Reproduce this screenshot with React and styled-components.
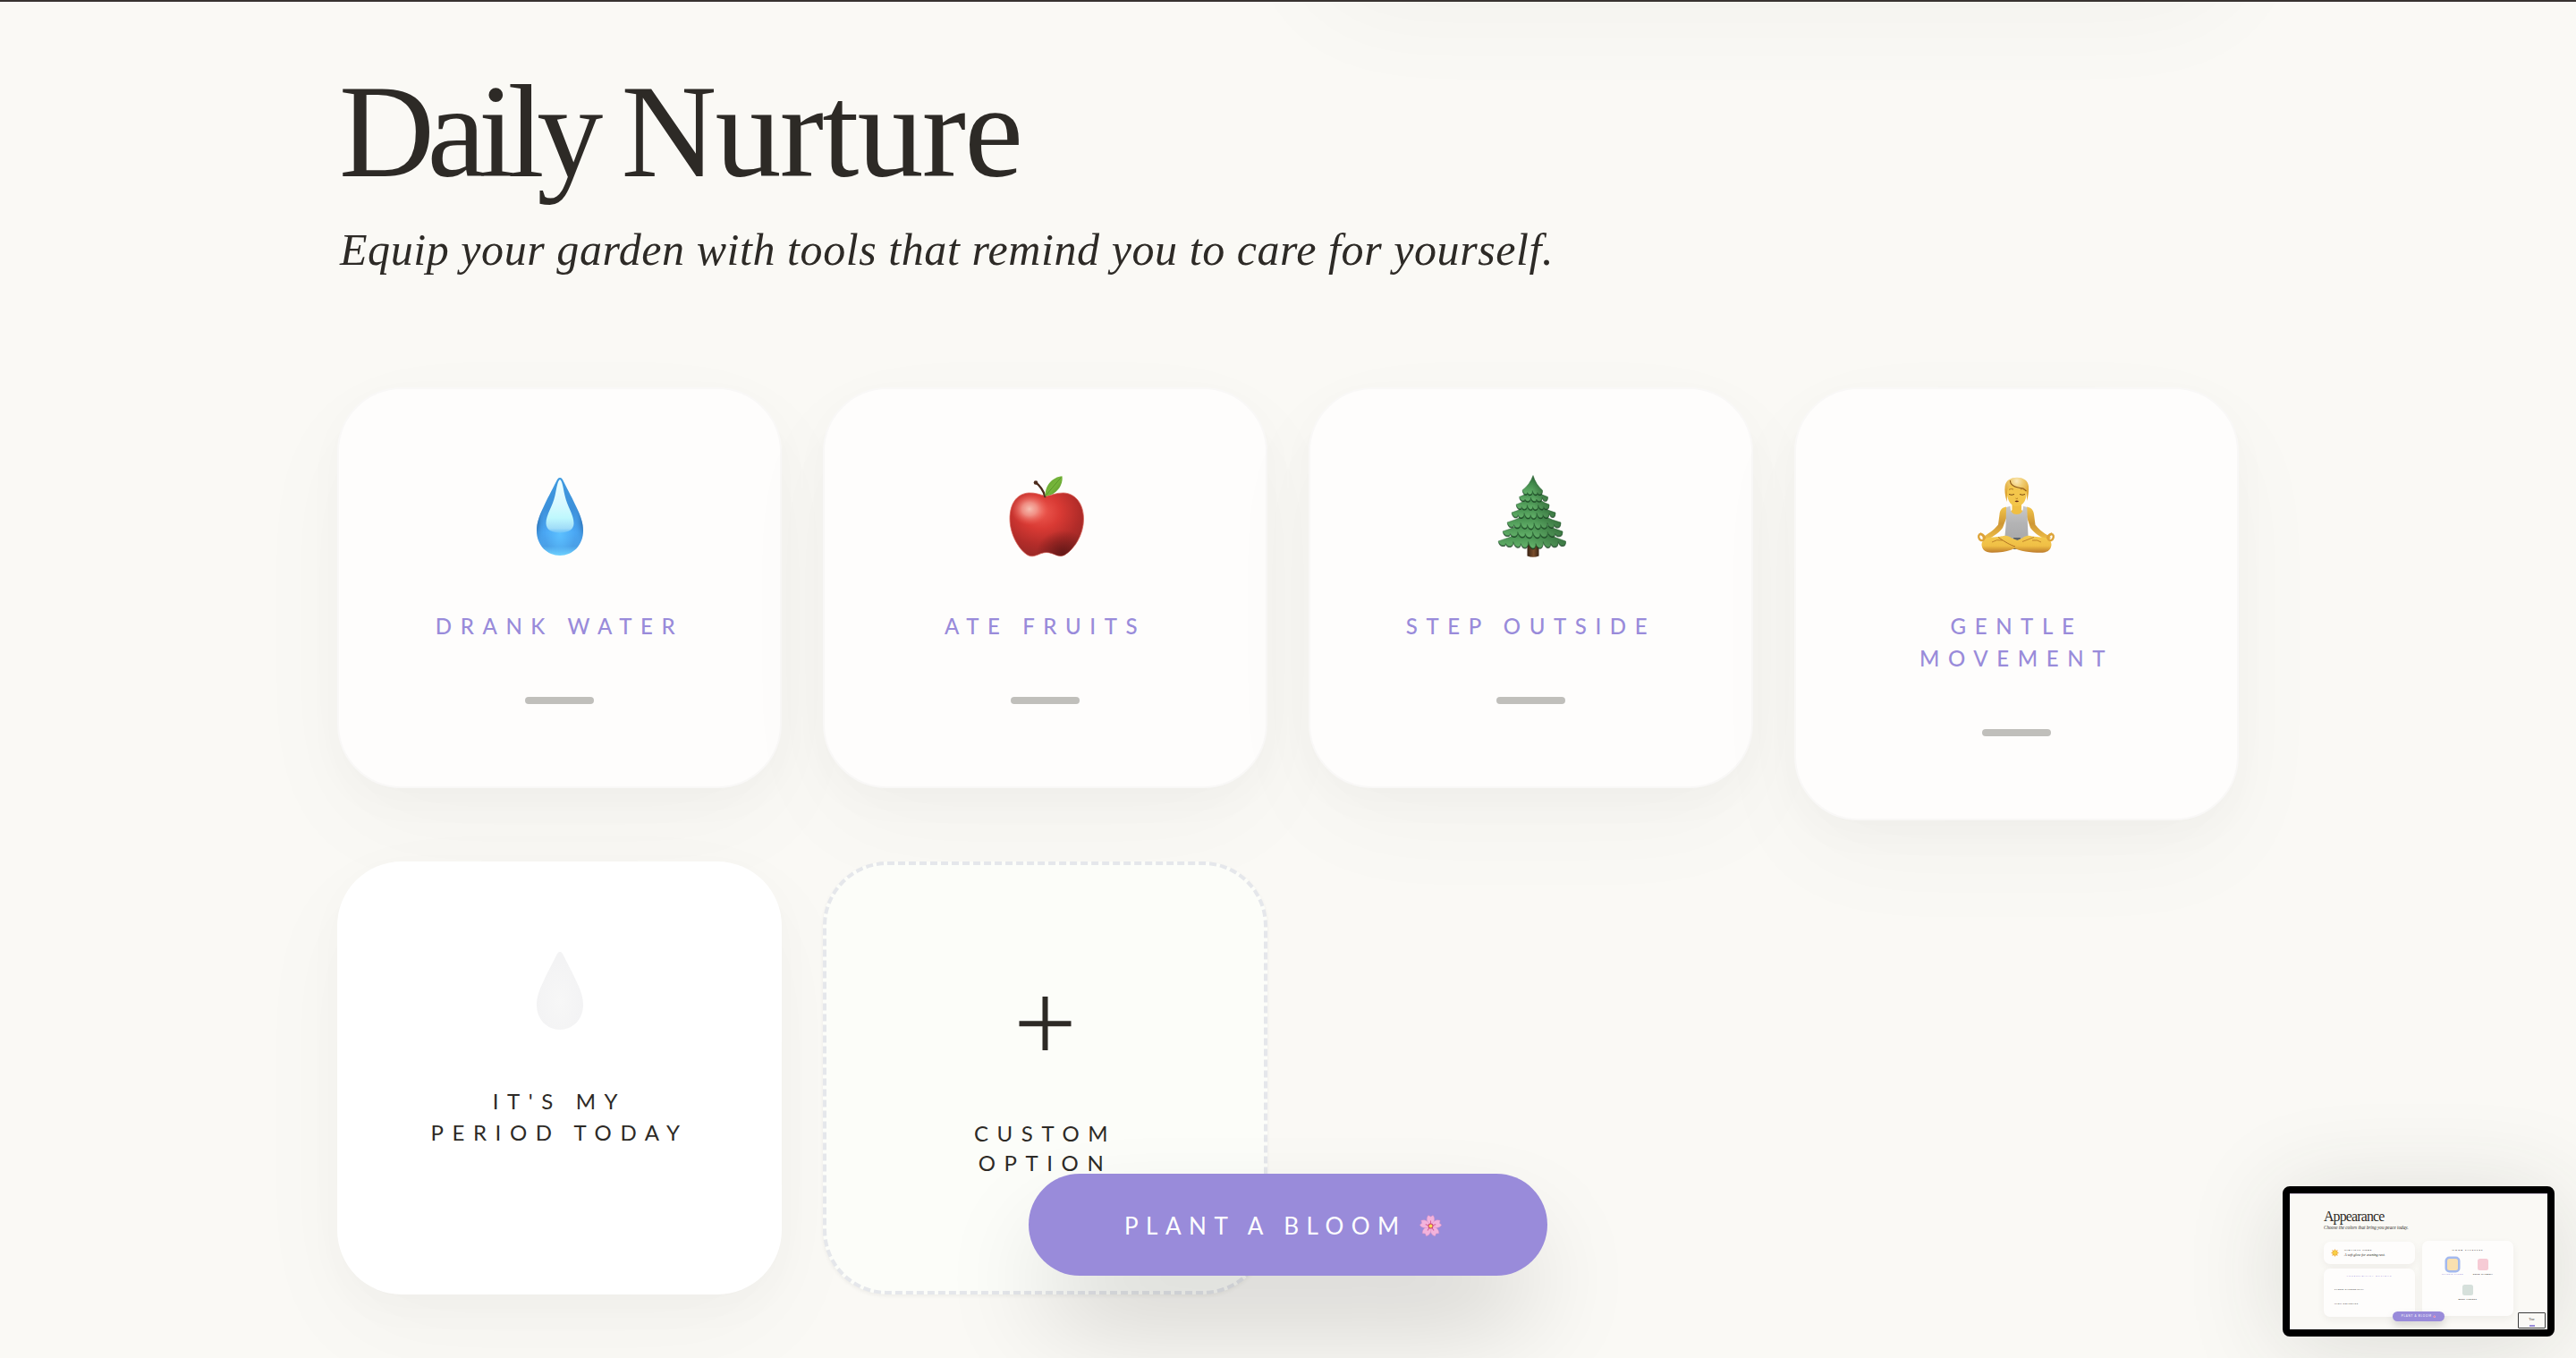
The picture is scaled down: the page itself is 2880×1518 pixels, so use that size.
import React from "react";
import styled, { createGlobalStyle, css } from "styled-components";

const serif = `"Liberation Serif", "Times New Roman", serif`;
const sans = `Lato, "Liberation Sans", sans-serif`;

const color = {
  page: "#faf9f5",
  ink: "#2d2a26",
  lilac: "#998bda",
  card: "#fefdfc",
};

const softShadow = "0 40px 120px rgba(0, 0, 0, 0.032), 0 16px 48px rgba(0, 0, 0, 0.025)";

const GlobalStyle = createGlobalStyle`
  *, *::before, *::after { box-sizing: border-box; }
  html, body { margin: 0; height: 100%; overflow: hidden; background: ${color.page}; }
  h1, h2, p { margin: 0; font-weight: 400; }
  button { font: inherit; border: 0; padding: 0; cursor: pointer; }
`;

const Page = styled.main`
  position: relative;
  height: 1518px;
  overflow: hidden;
  border-top: 2px solid #383331;
  background: ${color.page};
  color: ${color.ink};
`;

const PreviousPanelShadow = styled.div`
  position: absolute;
  top: -825px;
  left: 1463px;
  width: 1040px;
  height: 800px;
  border-radius: 80px;
  box-shadow: 0 40px 120px rgba(0, 0, 0, 0.036);
`;

const Section = styled.section`
  position: relative;
  width: 2126px;
  margin: 0 auto;
  padding-top: 65px;
`;

const Title = styled.h1`
  margin-left: 2px;
  font: 400 148px/160px ${serif};
  letter-spacing: -8.4px;
  white-space: nowrap;
`;

const TitleWord = styled.span`
  letter-spacing: ${({ $track }) => $track}px;
`;

const Subtitle = styled.p`
  margin-top: 14px;
  margin-left: 3px;
  font: italic 400 50px/76px ${serif};
  letter-spacing: 0.57px;
  white-space: nowrap;
`;

const Grid = styled.div`
  display: grid;
  grid-template-columns: repeat(4, 1fr);
  gap: 46px;
  align-items: start;
  margin-top: 116px;
`;

const Card = styled.button`
  display: flex;
  flex-direction: column;
  align-items: center;
  border-radius: 72px;
  color: ${color.ink};
  ${({ $kind }) =>
    $kind === "habit" &&
    css`
      padding: 93px 60px 92px;
      border: 2px solid #f9f8f7;
      background: ${color.card};
      color: ${color.lilac};
      box-shadow: ${softShadow};
    `}
  ${({ $kind }) =>
    $kind === "period" &&
    css`
      height: 484px;
      padding-top: 95px;
      background: #fff;
      box-shadow: ${softShadow};
    `}
  ${({ $kind }) =>
    $kind === "custom" &&
    css`
      height: 484px;
      padding-top: 147px;
      border: 4px dashed #e5e7eb;
      background: #fcfdf9;
      box-shadow: 0 2px 4px rgba(0, 0, 0, 0.05);
    `}
`;

const Label = styled.span`
  display: block;
  margin-top: ${({ $top }) => $top}px;
  font: ${({ $weight }) => $weight || 400} 24px/${({ $line }) => $line}px ${sans};
  letter-spacing: 9.6px;
  text-align: center;
  white-space: pre-line;
`;

const Meter = styled.span`
  width: 77px;
  height: 8px;
  margin-top: 61px;
  border-radius: 4px;
  background: #c0bfbb;
`;

const PlantButton = styled.button`
  position: absolute;
  left: 1150px;
  top: 1310px;
  display: flex;
  align-items: center;
  width: 580px;
  height: 114px;
  padding: 2px 0 0 107px;
  border-radius: 57px;
  background: ${color.lilac};
  color: #fff;
  font: 400 26px/40px ${sans};
  letter-spacing: 8.5px;
  white-space: nowrap;
  box-shadow: 0 60px 120px -20px rgba(0, 0, 0, 0.22);
`;

const ButtonIcon = styled.span`
  display: flex;
  margin-left: 13px;
`;

/* ---------- icons ---------- */

const DROP =
  "M48 6C50 6 51 8 52 10C58 22 62 29 66 38C71 48 74 57 74 65C74 82 62 93 48 93C34 93 22 82 22 65C22 57 25 48 30 38C34 29 38 22 44 10C45 8 46 6 48 6Z";

const WaterDrop = () => (
  <svg width="96" height="96" viewBox="0 0 96 96">
    <defs>
      <linearGradient id="wdBase" x1="0" y1="0" x2="0" y2="1">
        <stop offset="0" stopColor="#3f9be0" />
        <stop offset=".4" stopColor="#3d90da" />
        <stop offset=".7" stopColor="#4ba8f5" />
        <stop offset=".88" stopColor="#4a9fe6" />
        <stop offset="1" stopColor="#72d4ff" />
      </linearGradient>
      <linearGradient id="wdSide" x1="0" y1="0" x2="1" y2="0">
        <stop offset="0" stopColor="#235f9f" stopOpacity=".75" />
        <stop offset=".2" stopColor="#4aa6f2" stopOpacity="0" />
        <stop offset=".8" stopColor="#4aa6f2" stopOpacity="0" />
        <stop offset="1" stopColor="#235f9f" stopOpacity=".75" />
      </linearGradient>
      <linearGradient id="wdFade" x1="0" y1="0" x2="0" y2="1">
        <stop offset="0" stopColor="#fff" />
        <stop offset=".6" stopColor="#fff" />
        <stop offset=".82" stopColor="#000" />
      </linearGradient>
      <mask id="wdMask">
        <rect width="96" height="96" fill="url(#wdFade)" />
      </mask>
      <radialGradient id="wdGlow" cx=".5" cy=".72" r=".32">
        <stop offset="0" stopColor="#5cc0ff" />
        <stop offset="1" stopColor="#5cc0ff" stopOpacity="0" />
      </radialGradient>
      <linearGradient id="wdLight" x1="0" y1="0" x2="0" y2="1">
        <stop offset="0" stopColor="#effeff" />
        <stop offset=".45" stopColor="#d8f9ff" />
        <stop offset=".72" stopColor="#bff8fd" />
        <stop offset=".92" stopColor="#a0dcf8" />
        <stop offset="1" stopColor="#84cdf7" stopOpacity=".5" />
      </linearGradient>
    </defs>
    <path d={DROP} fill="url(#wdBase)" />
    <path d={DROP} fill="url(#wdSide)" mask="url(#wdMask)" />
    <path d={DROP} fill="url(#wdGlow)" />
    <path
      d="M48 8C50.5 9 51.5 17 53.5 26C56 38 63.5 47 63.5 57C63.5 64 57 67.5 48 67.5C39 67.5 32.5 64 32.5 57C32.5 47 40 38 42.5 26C44.500 17 45.5 9 48 8Z"
      fill="url(#wdLight)"
    />
  </svg>
);

const FadedDrop = () => (
  <svg width="96" height="96" viewBox="0 0 96 96">
    <defs>
      <radialGradient id="fdFill" cx=".5" cy=".63" r=".5">
        <stop offset="0" stopColor="#f7f7f7" />
        <stop offset="1" stopColor="#f3f3f4" />
      </radialGradient>
    </defs>
    <path d={DROP} fill="url(#fdFill)" />
  </svg>
);

const APPLE_BODY =
  "M48 26.5C42 25 36 22.5 29 23C15 24 8 36 8 52C8 70 19 88 29 93C36 96 41 89.500 49 89.5C57 89.5 62 96 69 92.5C80 86 90.5 70 90.5 52C90.5 36 82 23.5 68 23C60 22.7 54 26 48 26.5Z";

const Apple = () => (
  <svg width="96" height="96" viewBox="0 0 96 96">
    <defs>
      <radialGradient id="apBody" cx=".42" cy=".3" r=".75">
        <stop offset="0" stopColor="#ee5a50" />
        <stop offset=".35" stopColor="#d93a34" />
        <stop offset=".7" stopColor="#b22c29" />
        <stop offset="1" stopColor="#952826" />
      </radialGradient>
      <radialGradient id="apShade" cx=".72" cy=".95" r=".36">
        <stop offset="0" stopColor="#5a1414" stopOpacity=".8" />
        <stop offset="1" stopColor="#5a1414" stopOpacity="0" />
      </radialGradient>
      <radialGradient id="apShine" cx=".5" cy=".5" r=".5">
        <stop offset="0" stopColor="#f7bfb2" />
        <stop offset=".4" stopColor="#f5a79b" stopOpacity=".75" />
        <stop offset="1" stopColor="#ee6258" stopOpacity="0" />
      </radialGradient>
      <linearGradient id="apLeaf" x1="0" y1="0" x2="1" y2="1">
        <stop offset="0" stopColor="#5a9a2c" />
        <stop offset=".5" stopColor="#79b83c" />
        <stop offset="1" stopColor="#4f8c24" />
      </linearGradient>
    </defs>
    <path d={APPLE_BODY} fill="url(#apBody)" stroke="#d9665c" strokeWidth=".8" />
    <path d={APPLE_BODY} fill="url(#apShade)" />
    <ellipse cx="30" cy="41" rx="21" ry="18" fill="url(#apShine)" />
    <path d="M37 11.5C41 14 46 21 47.3 27" fill="none" stroke="#4b2a1c" strokeWidth="2.4" strokeLinecap="round" />
    <circle cx="37" cy="11.5" r="2.3" fill="#4b2a1c" />
    <path d="M47.5 26.5C47 15 56 5 66.5 4.3C68 14 60 26 47.5 26.5Z" fill="url(#apLeaf)" />
    <path d="M48.5 25.5C54 19 59 13 65.5 5.5" stroke="#4f8c24" strokeWidth=".8" fill="none" />
  </svg>
);

/* Each skirt of the evergreen has sloping sides and a row of rounded needles. */
const TIERS = [
  { top: 56, y: 77, left: 11, right: 86.5, n: 9, drop: 9 },
  { top: 48, y: 66, left: 16, right: 83, n: 8, drop: 8 },
  { top: 40, y: 56, left: 21, right: 81, n: 8, drop: 8 },
  { top: 31, y: 45, left: 26, right: 75, n: 7, drop: 7 },
  { top: 23, y: 36, left: 31, right: 68, n: 6, drop: 6 },
  { top: 16, y: 27.5, left: 34.5, right: 66.5, n: 5, drop: 5 },
  { top: 3.5, y: 20, left: 38, right: 60.5, n: 4, drop: 5 },
];

function skirt({ top, y, left, right, n, drop }) {
  const step = (right - left) / n;
  let d = `M50 ${top}Q${50 + (right - 50) * 0.3} ${(top + y) / 2 + 2} ${right} ${y}`;
  for (let i = n; i > 0; i--) {
    const x = left + step * (i - 1);
    const mid = x + step / 2;
    const sag = y + drop * (1 - Math.abs(mid - 50) / 75);
    const notch = i > 1 ? y + (i % 2 ? 0.5 : 2.5) : y;
    d += `C${x + step * 1.1} ${sag} ${x + step * 0.3} ${sag + 2} ${x} ${notch}`;
  }
  return `${d}Q${50 - (50 - left) * 0.3} ${(top + y) / 2 + 2} 50 ${top}Z`;
}

const Evergreen = () => (
  <svg width="96" height="96" viewBox="0 0 96 96">
    <defs>
      <linearGradient id="evTrunk" x1="0" y1="0" x2="1" y2="0">
        <stop offset="0" stopColor="#3a2415" />
        <stop offset=".55" stopColor="#7a4d2b" />
        <stop offset="1" stopColor="#3a2415" />
      </linearGradient>
      <linearGradient id="evLeaf" x1="0" y1="0" x2="0" y2="1">
        <stop offset="0" stopColor="#2c6136" />
        <stop offset=".4" stopColor="#418a4b" />
        <stop offset="1" stopColor="#66b46c" />
      </linearGradient>
      <linearGradient id="evSide" x1="0" y1="0" x2="1" y2="0">
        <stop offset=".5" stopColor="#123418" stopOpacity="0" />
        <stop offset="1" stopColor="#123418" stopOpacity=".4" />
      </linearGradient>
    </defs>
    <path d="M43.5 76H56.5V93.5Q50 96 43.5 93.5Z" fill="url(#evTrunk)" />
    {TIERS.map((t) => (
      <g key={t.y}>
        <path d={skirt(t)} fill="#173c1f" opacity=".8" transform="translate(0 1.4)" />
        <path d={skirt(t)} fill="url(#evLeaf)" stroke="#2d6636" strokeWidth=".5" />
        <path d={skirt(t)} fill="url(#evSide)" />
      </g>
    ))}
  </svg>
);

const Lotus = () => (
  <svg width="96" height="96" viewBox="0 0 96 96">
    <defs>
      <linearGradient id="loSkin" x1="0" y1="0" x2="0" y2="1">
        <stop offset="0" stopColor="#f3c94f" />
        <stop offset=".6" stopColor="#f0bf45" />
        <stop offset="1" stopColor="#bd7b2b" />
      </linearGradient>
      <linearGradient id="loArm" x1="0" y1="0" x2="0" y2="1">
        <stop offset="0" stopColor="#f3c548" />
        <stop offset=".5" stopColor="#cf9735" />
        <stop offset="1" stopColor="#f1c149" />
      </linearGradient>
      <linearGradient id="loShirt" x1="0" y1="0" x2="0" y2="1">
        <stop offset="0" stopColor="#c9c9c9" />
        <stop offset=".5" stopColor="#b3b3b4" />
        <stop offset="1" stopColor="#a8a8a9" />
      </linearGradient>
      <radialGradient id="loHair" cx=".5" cy=".15" r=".65">
        <stop offset="0" stopColor="#fae9bd" />
        <stop offset=".4" stopColor="#f1cd72" />
        <stop offset="1" stopColor="#dfa531" />
      </radialGradient>
    </defs>
    <path d="M36 38.5C31 39.5 29 42 28.5 47L27 58.5C22 65 15 69 9 73L12 76.5C19 73 27 69 32 62L36.5 50Z" fill="url(#loArm)" />
    <path d="M59 38.5C64 39.5 66.5 42 67 47L68.5 58.5C73 65 80 69 86 73L83 76.5C76 73 68 69 63 62L59 50Z" fill="url(#loArm)" />
    <path d="M42.5 34H53V42L60 48H36L42.5 42Z" fill="#f0bf43" />
    <path d="M36 39L40.5 37.8C40.5 44 43 47 47.8 47C52.5 47 55 44 55 37.8L59.3 39L60 60L60.8 77H34L35.5 60Z" fill="url(#loShirt)" />
    <path d="M44 73H52V86H44Z" fill="#5d636b" />
    <path d="M8.5 81C8.5 75 14 72.5 22 72.5L31 71.5C35 70 39 71 42 73.5L54 78C47 86 38 89.7 20 89.7C12 89.7 9 86 8.5 81Z" fill="url(#loSkin)" />
    <path d="M86.5 81C86.5 75 82 72.5 74 72.5L65 71.5C61 70 57 71 54 73.5L46 77L30 71.5C27 73 35 80 43 84C52 88.5 62 89.7 75 89.7C83 89.7 86 86 86.5 81Z" fill="url(#loSkin)" />
    <path d="M27 72.5C35 78 40 81 46 83" stroke="#a8691f" strokeWidth=".9" fill="none" />
    <path d="M67 72.5L54 77.5M20 78Q25 74.5 32 76M75 78Q71 75 65 76" stroke="#b97c27" strokeWidth=".9" fill="none" />
    <path d="M12 73L7.5 68.5M8 76C5 75 4.500 71 6 69.5C8.500 68 11.5 70.5 11.5 72.500C11.5 74.5 10.5 76.500 8 76Z" fill="none" stroke="#dda338" strokeWidth="2.4" strokeLinecap="round" />
    <path d="M82 73L86.5 68.5M86 76C89 75 89.5 71 88 69.5C85.500 68 82.5 70.5 82.5 72.500C82.5 74.5 83.5 76.500 86 76Z" fill="none" stroke="#dda338" strokeWidth="2.4" strokeLinecap="round" />
    <path d="M36.5 18C36 12 40 9 47.8 9C55 9 59.3 12 59 19C59.3 29 56 37.8 47.8 37.8C39.5 37.8 36.3 29 36.5 18Z" fill="#f3c64b" />
    <path d="M36.8 33C34.5 26 34 20 34.6 15.5C35.5 9 41 5.7 48 5.7C55 5.7 60.4 9 61 15.5C61.5 21 60.5 27 59.2 32L58.7 21C55 18.5 45 18.5 40.5 13C39.5 16 37.5 18 37 22Z" fill="url(#loHair)" />
    <path d="M40.5 9C40 14 46 17 55 18L58.5 21" fill="none" stroke="#8f5a18" strokeWidth="1.1" />
    <path d="M39 19.3Q41.5 17.8 44 19M51.8 19Q54 17.8 56.5 19.3" fill="none" stroke="#a8711f" strokeWidth=".9" />
    <path d="M39 24.5Q42 26 45 24.5M51 24.5Q54 26 57 24.5" fill="none" stroke="#7b4c14" strokeWidth="1" />
    <path d="M46.5 29Q47.8 30 49 29" fill="none" stroke="#a96e20" strokeWidth=".8" />
    <path d="M45.5 32.2Q47.8 31 50.2 32.2Q47.8 34.5 45.5 32.2Z" fill="#6b2f18" />
  </svg>
);

const Blossom = ({ size = 27 }) => (
  <svg width={size} height={size} viewBox="0 0 26 26">
    {[0, 72, 144, 216, 288].map((a) => (
      <g key={a} transform={`rotate(${a} 13 13)`}>
        <path d="M13 13C8.5 9.5 7.8 4.5 10.5 1.4L13 3L15.5 1.4C18.2 4.5 17.5 9.5 13 13Z" fill="#f3b3dc" stroke="#d98abf" strokeWidth=".4" />
        <path d="M13 12V7.500" stroke="#d9609a" strokeWidth="1" strokeLinecap="round" />
      </g>
    ))}
    <circle cx="13" cy="13" r="2.8" fill="#c93f6c" />
    <circle cx="13" cy="13" r="1.9" fill="#f4dc50" />
  </svg>
);

const Plus = () => (
  <svg width="60" height="60" viewBox="0 0 60 60">
    <path d="M29.500 0V60M.5 30.3H58.5" stroke={color.ink} strokeWidth="6" />
  </svg>
);

/* ---------- miniature preview window ---------- */

const Pip = styled.aside`
  position: absolute;
  left: 2552px;
  top: 1324px;
  width: 304px;
  height: 168px;
  border: 8px solid #000;
  border-radius: 8px;
  background: ${color.page};
  box-shadow: 0 10px 110px rgba(45, 55, 45, 0.15);
`;

const PipPage = styled.div`
  position: relative;
  height: 152px;
  padding: 16px 38px 0;
  border-top: 1px solid #d9cfe0;
  overflow: hidden;
`;

const PipTitle = styled.h2`
  font: 400 15.8px/18px ${serif};
  letter-spacing: -0.8px;
`;

const PipSubtitle = styled.p`
  font: italic 400 5.2px/7px ${serif};
  letter-spacing: -0.02px;
  white-space: nowrap;
`;

const PipColumns = styled.div`
  display: grid;
  grid-template-columns: 102px 102px;
  column-gap: 8px;
  align-items: start;
  margin-top: 11px;
`;

const PipStack = styled.div`
  display: grid;
  row-gap: 5px;
  padding-top: 1px;
`;

const PipCard = styled.div`
  height: ${({ $h }) => $h}px;
  padding: ${({ $pad }) => $pad || "0"};
  border-radius: 7px;
  background: #fefdfc;
  box-shadow: 0 3px 8px rgba(45, 42, 38, 0.06);
`;

const PipRow = styled(PipCard)`
  display: flex;
  align-items: center;
  gap: 6px;
`;

const Tiny = styled.p`
  font: ${({ $italic }) => ($italic ? `italic 4.2px/5px ${serif}` : `600 2.5px/4px ${sans}`)};
  letter-spacing: ${({ $track }) => $track ?? 0.75}px;
  color: ${({ $lilac }) => ($lilac ? color.lilac : color.ink)};
  text-align: ${({ $center }) => ($center ? "center" : "left")};
  margin-top: ${({ $top }) => $top || 0}px;
  white-space: nowrap;
`;

const Swatches = styled.div`
  display: flex;
  flex-wrap: wrap;
  justify-content: center;
  gap: 9px 8px;
  margin-top: 7px;
`;

const SwatchItem = styled.div`
  display: flex;
  flex-direction: column;
  align-items: center;
  width: 26px;
`;

const Swatch = styled.span`
  width: 12.5px;
  height: 12.5px;
  border-radius: 2.5px;
  background: ${({ $fill }) => $fill};
  box-shadow: ${({ $on }) => ($on ? "0 0 0 2.5px #a3b9ee" : "none")};
`;

const PipPlant = styled.div`
  position: absolute;
  left: 115px;
  top: 130.5px;
  display: flex;
  align-items: center;
  justify-content: center;
  gap: 1px;
  width: 58px;
  height: 11.5px;
  border-radius: 6px;
  background: ${color.lilac};
  color: #fff;
  font: 400 2.9px/4px ${sans};
  letter-spacing: 0.85px;
  box-shadow: 0 5px 10px rgba(0, 0, 0, 0.15);
`;

const NestedPip = styled.div`
  position: absolute;
  left: 255px;
  top: 132px;
  width: 31px;
  height: 17.5px;
  padding: 5px 4px 0;
  border: 1px solid #3b3b3b;
  border-radius: 1px;
  background: ${color.page};
  text-align: center;
  font: 400 3px/4px ${serif};
`;

const NestedBar = styled.div`
  width: 6px;
  height: 1.5px;
  margin: 4px auto 0;
  background: ${color.lilac};
`;

const Sun = () => (
  <svg width="9" height="9" viewBox="0 0 18 18">
    <path
      d="M9 0L11 4L15.4 2.6L14 7L18 9L14 11L15.4 15.4L11 14L9 18L7 14L2.6 15.4L4 11L0 9L4 7L2.6 2.6L7 4Z"
      fill="#f0a93a"
    />
    <circle cx="9" cy="9" r="4.8" fill="#f7cf45" />
  </svg>
);

const Preview = () => (
  <Pip>
    <PipPage>
      <PipTitle>Appearance</PipTitle>
      <PipSubtitle>Choose the colors that bring you peace today.</PipSubtitle>
      <PipColumns>
        <PipStack>
          <PipRow $h={25} $pad="0 0 0 8px">
            <Sun />
            <div>
              <Tiny>MIDNIGHT MODE</Tiny>
              <Tiny $italic $track={-0.05}>A soft glow for evening rest.</Tiny>
            </div>
          </PipRow>
          <PipCard $h={54} $pad="7px 12px 0">
            <Tiny $lilac $center $track={1.05}>ACCESSIBILITY OPTIONS</Tiny>
            <Tiny $top={10.5} $track={0.5}>LARGE TYPOGRAPHY</Tiny>
            <Tiny $top={12} $track={0.5}>HIGH CONTRAST</Tiny>
          </PipCard>
        </PipStack>
        <PipCard $h={84} $pad="9px 16px 0">
          <Tiny $center $track={1.1}>MOOD PALETTES</Tiny>
          <Swatches>
            <SwatchItem>
              <Swatch $fill="#f9e0b0" $on />
              <Tiny $lilac $top={3} $track={0.45}>CLASSIC PAPER</Tiny>
            </SwatchItem>
            <SwatchItem>
              <Swatch $fill="#f6cbd5" />
              <Tiny $top={3} $track={0.45}>ROSE GARDEN</Tiny>
            </SwatchItem>
            <SwatchItem>
              <Swatch $fill="#d6e0db" />
              <Tiny $top={3} $track={0.45}>DEEP FOREST</Tiny>
            </SwatchItem>
          </Swatches>
        </PipCard>
      </PipColumns>
      <PipPlant>
        PLANT A BLOOM <Blossom size={3.5} />
      </PipPlant>
      <NestedPip>
        Your
        <NestedBar />
      </NestedPip>
    </PipPage>
  </Pip>
);

const HABITS = [
  { label: "DRANK WATER", Icon: WaterDrop },
  { label: "ATE FRUITS", Icon: Apple },
  { label: "STEP OUTSIDE", Icon: Evergreen },
  { label: "GENTLE\nMOVEMENT", Icon: Lotus },
];

export default function App() {
  return (
    <>
      <GlobalStyle />
      <Page>
        <PreviousPanelShadow />
        <Section>
          <Title>
            Daily <TitleWord $track={-1.8}>Nurture</TitleWord>
          </Title>
          <Subtitle>Equip your garden with tools that remind you to care for yourself.</Subtitle>
          <Grid>
            {HABITS.map(({ label, Icon }) => (
              <Card key={label} $kind="habit">
                <Icon />
                <Label $top={58} $line={36} $weight={500}>{label}</Label>
                <Meter />
              </Card>
            ))}
            <Card $kind="period">
              <FadedDrop />
              <Label $top={59} $line={35}>{"IT'S MY\nPERIOD TODAY"}</Label>
            </Card>
            <Card $kind="custom">
              <Plus />
              <Label $top={76} $line={33}>{"CUSTOM\nOPTION"}</Label>
            </Card>
          </Grid>
        </Section>
        <PlantButton>
          PLANT A BLOOM
          <ButtonIcon>
            <Blossom />
          </ButtonIcon>
        </PlantButton>
        <Preview />
      </Page>
    </>
  );
}
